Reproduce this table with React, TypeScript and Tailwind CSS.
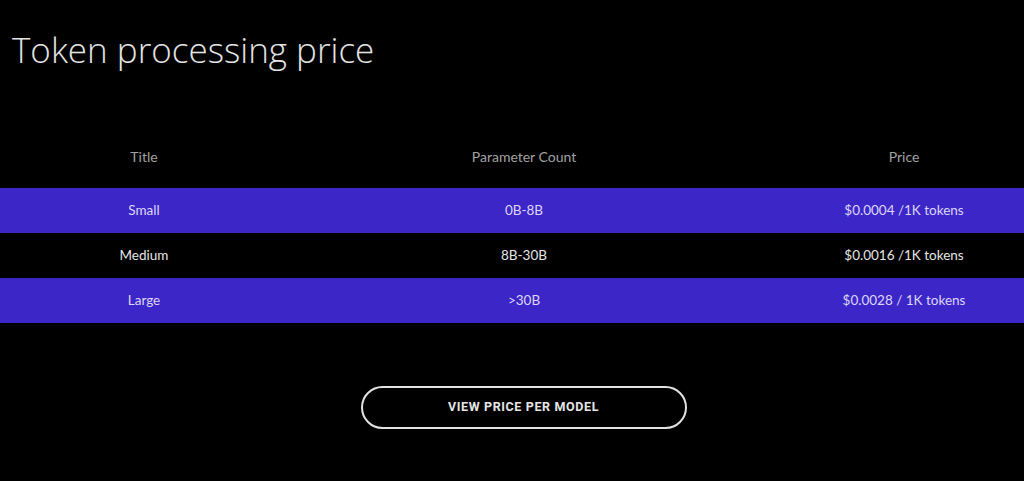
const rows = [
  { title: "Small", params: "0B-8B", price: "$0.0004 /1K tokens", hi: true },
  { title: "Medium", params: "8B-30B", price: "$0.0016 /1K tokens", hi: false },
  { title: "Large", params: ">30B", price: "$0.0028 / 1K tokens", hi: true },
];

const App = () => {
  return (
    <div className="w-[1024px] h-[481px] bg-black text-white font-['Lato',sans-serif] overflow-hidden">
      <h1 className="pl-[12px] pt-[29px] text-[35px] leading-[42px] font-light text-[#e4e4e4] font-['Open_Sans',sans-serif]">
        Token processing price
      </h1>

      {/* pricing table */}
      <div className="mt-[68px]">
        <div className="grid grid-cols-[288px_472px_1fr] h-[34px] items-center text-[14px] text-[#a2a2a2]">
          <div className="text-center">Title</div>
          <div className="text-center">Parameter Count</div>
          <div className="text-center pl-[24px]">Price</div>
        </div>
        <div className="mt-[15px]">
          {rows.map((r) => (
            <div
              key={r.title}
              className={
                "grid grid-cols-[288px_472px_1fr] h-[45px] items-center text-[13.5px] " +
                (r.hi ? "bg-[#3c26c8] text-[#ddd6f7]" : "bg-black text-[#e6e6e6]")
              }
            >
              <div className="text-center">{r.title}</div>
              <div className="text-center">{r.params}</div>
              <div className="text-center pl-[24px]">{r.price}</div>
            </div>
          ))}
        </div>
      </div>

      <div className="flex justify-center mt-[63px] pl-[23px]">
        <button className="w-[326px] h-[43px] rounded-full border-2 border-[#e2e2e2] text-[12.5px] font-bold tracking-[0.05em] text-[#e6e6e6] font-['Roboto',sans-serif]">
          VIEW PRICE PER MODEL
        </button>
      </div>
    </div>
  );
};

export default App;
